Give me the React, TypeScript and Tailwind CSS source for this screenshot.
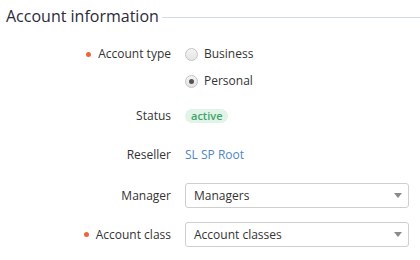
import { ReactNode } from "react";

function Row({ label, required, children, className = "" }: { label: string; required?: boolean; children: ReactNode; className?: string }) {
  return (
    <div className={`flex items-center ${className}`}>
      <div className="w-[171px] shrink-0 flex items-center justify-end gap-[7px] pr-[14px] box-content text-[#333]">
        {required && <span className="w-[5px] h-[5px] rounded-full bg-[#f4623a]" />}
        <span>{label}</span>
      </div>
      <div className="flex-1">{children}</div>
    </div>
  );
}

function Radio({ label, checked }: { label: string; checked?: boolean }) {
  return (
    <label className="flex items-center gap-[6px] h-[20px]">
      <span className="w-[13px] h-[13px] rounded-full border border-[#c4c4c4] bg-gradient-to-b from-[#f4f4f4] to-[#e4e4e4] flex items-center justify-center">
        {checked && <span className="w-[5px] h-[5px] rounded-full bg-[#555]" />}
      </span>
      <span className="text-[#333]">{label}</span>
    </label>
  );
}

function Select({ value }: { value: string }) {
  return (
    <div className="w-[224px] h-[25px] border border-[#cfcfcf] rounded-[3px] flex items-center justify-between pl-[8px] pr-[6px] text-[#333] bg-white">
      <span>{value}</span>
      <span className="w-0 h-0 border-l-[4px] border-r-[4px] border-t-[5px] border-l-transparent border-r-transparent border-t-[#8a8a8a]" />
    </div>
  );
}

export default function App() {
  return (
    <div className="w-[420px] h-[260px] bg-white font-['Open_Sans',sans-serif] text-[12px]">
      <div className="flex items-center pl-[6px] pt-[3px]">
        <h2 className="text-[16px] text-[#2b2b3a] leading-[26px]">Account information</h2>
        <div className="flex-1 h-px bg-[#d5dbe4] ml-[3px] mt-[2px]" />
      </div>
      <div className="mt-[15px]">
        <Row label="Account type" required>
          <Radio label="Business" />
        </Row>
        <Row label="" className="mt-[7px]">
          <Radio label="Personal" checked />
        </Row>
        <Row label="Status" className="mt-[16px]">
          <span className="inline-block rounded-full bg-[#e2f3e8] text-[#3fa56b] font-semibold text-[11px] leading-[14px] px-[6px]">active</span>
        </Row>
        <Row label="Reseller" className="mt-[21px]">
          <span className="text-[#4f86c6]">SL SP Root</span>
        </Row>
        <Row label="Manager" className="mt-[19px]">
          <Select value="Managers" />
        </Row>
        <Row label="Account class" required className="mt-[14px]">
          <Select value="Account classes" />
        </Row>
      </div>
    </div>
  );
}
